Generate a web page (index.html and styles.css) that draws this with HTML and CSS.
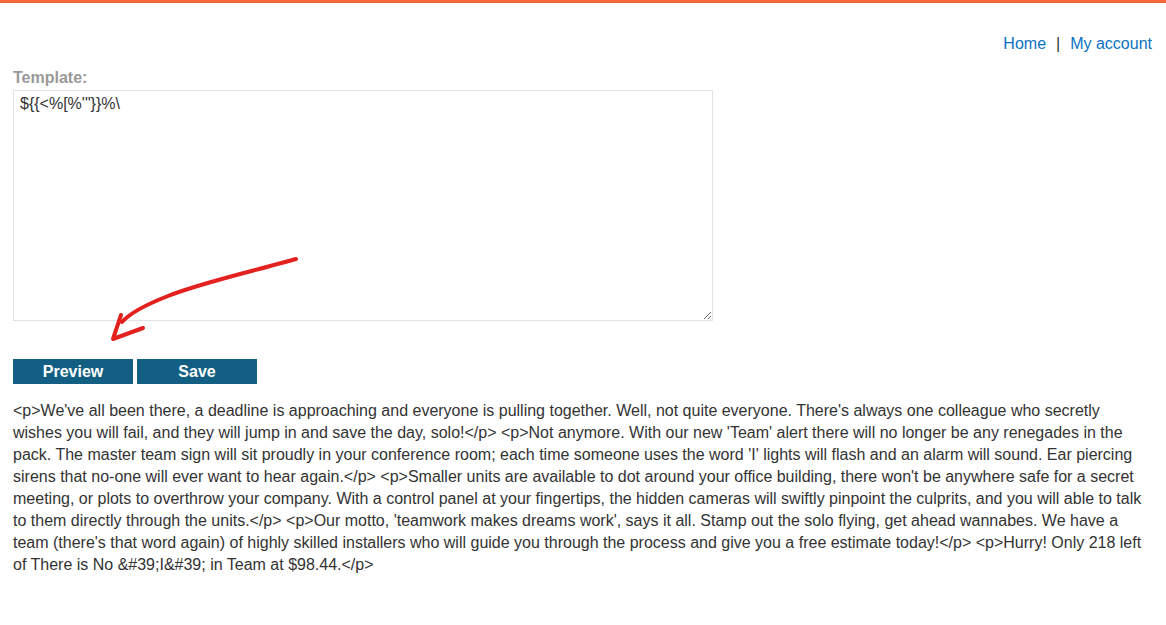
FILE: index.html
```html
<!DOCTYPE html>
<html>
<head>
<meta charset="utf-8">
<link rel="stylesheet" href="styles.css">
</head>
<body>
<div class="topbar"></div>
<div class="page">
  <nav class="nav">
    <a href="#">Home</a><span class="sep">|</span><a href="#">My account</a>
  </nav>
  <form class="form">
    <label class="label" for="tpl">Template:</label>
    <textarea id="tpl" class="editor">${{&lt;%[%'"}}%\</textarea>
    <div class="buttons">
      <button type="button" class="btn">Preview</button>
      <button type="button" class="btn">Save</button>
    </div>
  </form>
  <div class="preview">&lt;p&gt;We've all been there, a deadline is approaching and everyone is pulling together. Well, not quite everyone. There's always one colleague who secretly wishes you will fail, and they will jump in and save the day, solo!&lt;/p&gt; &lt;p&gt;Not anymore. With our new 'Team' alert there will no longer be any renegades in the pack. The master team sign will sit proudly in your conference room; each time someone uses the word 'I' lights will flash and an alarm will sound. Ear piercing sirens that no-one will ever want to hear again.&lt;/p&gt; &lt;p&gt;Smaller units are available to dot around your office building, there won't be anywhere safe for a secret meeting, or plots to overthrow your company. With a control panel at your fingertips, the hidden cameras will swiftly pinpoint the culprits, and you will able to talk to them directly through the units.&lt;/p&gt; &lt;p&gt;Our motto, 'teamwork makes dreams work', says it all. Stamp out the solo flying, get ahead wannabes. We have a team (there's that word again) of highly skilled installers who will guide you through the process and give you a free estimate today!&lt;/p&gt; &lt;p&gt;Hurry! Only 218 left of There is No &amp;#39;I&amp;#39; in Team at $98.44.&lt;/p&gt;</div>
</div>
<svg class="arrow" width="1166" height="625" viewBox="0 0 1166 625">
  <path d="M296 259 C 250 272, 200 283, 168 296 C 145 305, 130 313, 122 322" fill="none" stroke="#e3211e" stroke-width="4" stroke-linecap="round"/>
  <path d="M121 315 L 113 339 L 143 328" fill="none" stroke="#e3211e" stroke-width="4" stroke-linecap="round" stroke-linejoin="round"/>
</svg>
</body>
</html>
```

FILE: styles.css
```css
html, body {
  margin: 0;
  padding: 0;
  background: #fff;
}
body {
  font-family: "Liberation Sans", Arial, sans-serif;
  font-size: 16px;
  color: #333;
  position: relative;
  width: 1166px;
  height: 625px;
  overflow: hidden;
}
.topbar {
  height: 3px;
  background: #f4683b;
}
.page {
  width: 1140px;
  padding: 0 13px;
}
.nav {
  display: flex;
  justify-content: flex-end;
  align-items: center;
  margin-top: 32px;
  line-height: 18px;
  padding-right: 1px;
}
.nav a {
  color: #0b72c2;
  text-decoration: none;
}
.sep {
  margin: 0 10px;
  color: #333;
}
.form {
  display: flex;
  flex-direction: column;
  align-items: flex-start;
  margin: 16px 0 0;
}
.label {
  font-weight: bold;
  color: #999;
  line-height: 18px;
}
.editor {
  display: block;
  box-sizing: border-box;
  width: 700px;
  height: 231px;
  margin: 3px 0 0;
  padding: 4px 6px;
  border: 1px solid #e2e2e2;
  font-family: "Liberation Sans", Arial, sans-serif;
  font-size: 16px;
  line-height: 18px;
  color: #333;
  outline: none;
}
.buttons {
  display: flex;
  gap: 4px;
  margin-top: 38px;
}
.btn {
  width: 120px;
  height: 25px;
  padding: 0;
  border: none;
  border-radius: 0;
  background: #135f83;
  color: #fff;
  font-family: "Liberation Sans", Arial, sans-serif;
  font-size: 16px;
  font-weight: bold;
  line-height: 25px;
}
.preview {
  margin-top: 16px;
  line-height: 22px;
  color: #333;
}
.arrow {
  position: absolute;
  left: 0;
  top: 0;
  pointer-events: none;
}
```
